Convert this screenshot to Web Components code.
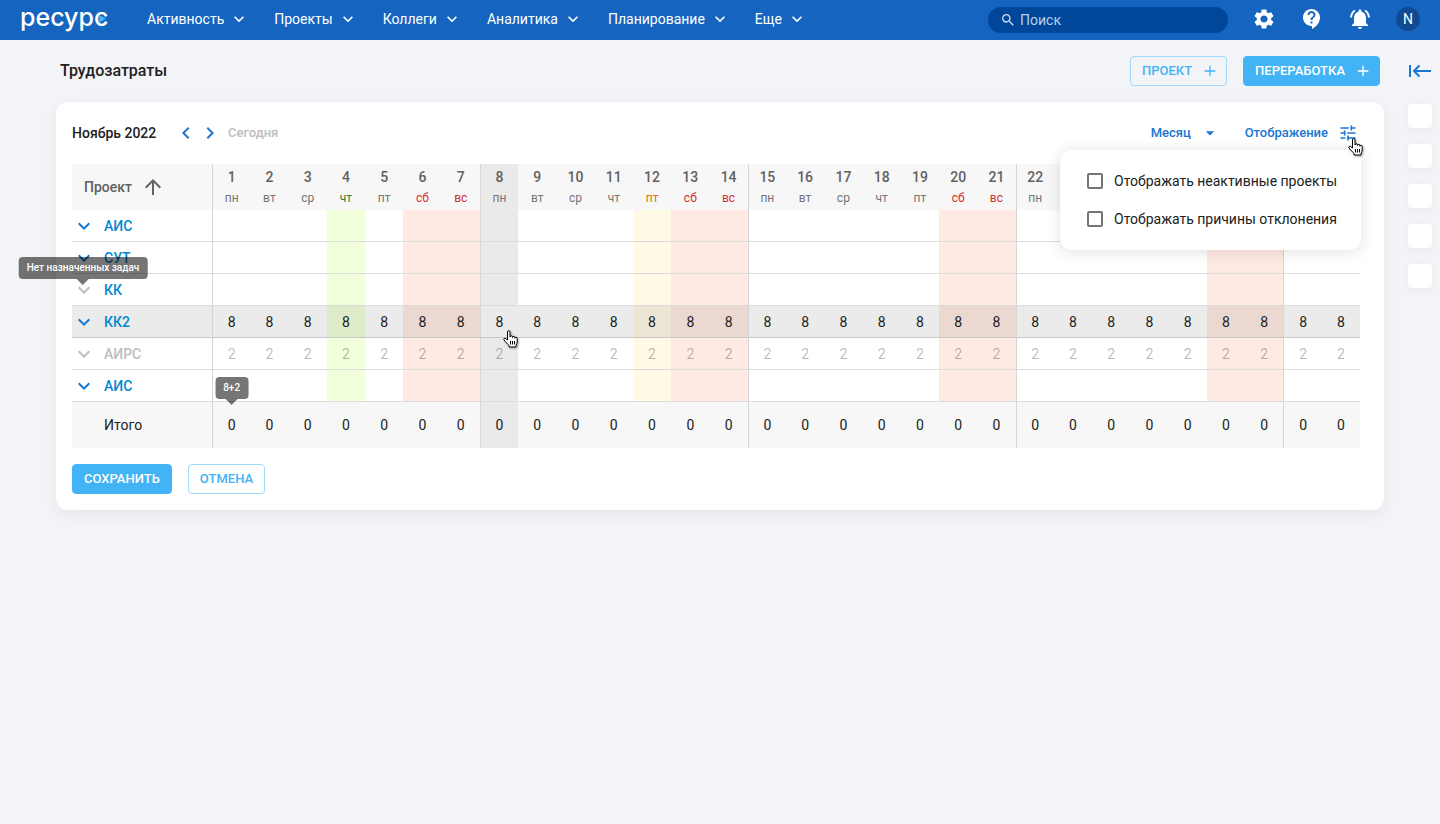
<!DOCTYPE html>
<html lang="ru">
<head>
<meta charset="utf-8">
<meta name="viewport" content="width=device-width, initial-scale=1">
<title>Трудозатраты</title>
<style>
  :root {
    --bar: #1565c0;
    --link: #1976d2;
    --name: #0288d1;
    --accent: #42b3f5;
    --accent-line: #a1d9fa;
    --text: #212121;
    --muted: #616161;
    --off: #bdbdbd;
  }
  html, body { margin: 0; min-height: 100vh; }
  body {
    background: #f3f4f7;
    color: var(--text);
    font-family: Roboto, "Liberation Sans", sans-serif;
    font-size: 14px;
    line-height: 20px;
  }
</style>
</head>
<body>
<app-shell>
  <app-header slot="header"></app-header>
  <page-heading slot="main">
    Трудозатраты
    <ui-button slot="actions" icon="plus" variant="outline">ПРОЕКТ</ui-button>
    <ui-button slot="actions" icon="plus">ПЕРЕРАБОТКА</ui-button>
  </page-heading>
  <ui-card slot="main">
    <month-toolbar slot="top"></month-toolbar>
    <time-table></time-table>
    <ui-button slot="footer">СОХРАНИТЬ</ui-button>
    <ui-button slot="footer" variant="outline">ОТМЕНА</ui-button>
  </ui-card>
  <side-rail slot="rail"></side-rail>
</app-shell>

<script>
const ICONS = {
  down: '<path d="M16.59 8.59L12 13.17 7.41 8.59 6 10l6 6 6-6z"/>',
  left: '<path d="M15.41 7.41L14 6l-6 6 6 6 1.41-1.41L10.83 12z"/>',
  right: '<path d="M10 6L8.59 7.41 13.17 12l-4.58 4.59L10 18l6-6z"/>',
  drop: '<path d="M7 10l5 5 5-5z"/>',
  plus: '<path d="M20 13h-7v7h-2v-7H4v-2h7V4h2v7h7z"/>',
  up: '<path d="M4 12l1.41 1.41L11 7.83V20h2V7.83l5.58 5.59L20 12l-8-8z"/>',
  tune: '<path d="M3 17v2h6v-2H3zM3 5v2h10V5H3zm10 16v-2h8v-2h-8v-2h-2v6h2zM7 9v2H3v2h4v2h2V9H7zm14 4v-2H11v2h10zm-6-4h2V7h4V5h-4V3h-2v6z"/>',
  search: '<path d="M15.5 14h-.79l-.28-.27A6.471 6.471 0 0 0 16 9.5 6.5 6.5 0 1 0 9.5 16c1.61 0 3.09-.59 4.23-1.57l.27.28v.79l5 4.99L20.49 19l-4.99-5zm-6 0C7.01 14 5 11.99 5 9.5S7.01 5 9.5 5 14 7.01 14 9.5 11.99 14 9.5 14z"/>',
  settings: '<path d="M19.14 12.94c.04-.3.06-.61.06-.94 0-.32-.02-.64-.07-.94l2.03-1.58a.49.49 0 0 0 .12-.61l-1.92-3.32a.488.488 0 0 0-.59-.22l-2.39.96c-.5-.38-1.03-.7-1.62-.94l-.36-2.54a.484.484 0 0 0-.48-.41h-3.84c-.24 0-.43.17-.47.41l-.36 2.54c-.59.24-1.13.57-1.62.94l-2.39-.96c-.22-.08-.47 0-.59.22L2.74 8.87c-.12.21-.08.47.12.61l2.03 1.58c-.05.3-.09.63-.09.94s.02.64.07.94l-2.03 1.58a.49.49 0 0 0-.12.61l1.92 3.32c.12.22.37.29.59.22l2.39-.96c.5.38 1.03.7 1.62.94l.36 2.54c.05.24.24.41.48.41h3.84c.24 0 .44-.17.47-.41l.36-2.54c.59-.24 1.13-.56 1.62-.94l2.39.96c.22.08.47 0 .59-.22l1.92-3.32c.12-.22.07-.47-.12-.61l-2.01-1.58zM12 15.6c-1.98 0-3.6-1.62-3.6-3.6s1.62-3.6 3.6-3.6 3.6 1.62 3.6 3.6-1.62 3.6-3.6 3.6z"/>',
  help: '<path d="M11.5 2C6.81 2 3 5.81 3 10.5S6.81 19 11.5 19h.5v3c4.86-2.34 8-7 8-11.5C20 5.81 16.19 2 11.5 2zm1 14.5h-2v-2h2v2zm0-3.5h-2c0-3.25 3-3 3-5 0-1.1-.9-2-2-2s-2 .9-2 2h-2c0-2.21 1.79-4 4-4s4 1.79 4 4c0 2.5-3 2.75-3 5z"/>',
  bell: '<path d="M7.58 4.08L6.15 2.65C3.75 4.48 2.17 7.3 2.03 10.5h2c.15-2.65 1.51-4.97 3.55-6.42zm12.39 6.42h2c-.15-3.2-1.73-6.02-4.12-7.85l-1.42 1.43c2.02 1.45 3.39 3.77 3.54 6.42zM18 11c0-3.07-1.64-5.64-4.5-6.32V4c0-.83-.67-1.5-1.5-1.5s-1.5.67-1.5 1.5v.68C7.63 5.36 6 7.92 6 11v5l-2 2v1h16v-1l-2-2v-5zm-6 11c.14 0 .27-.01.4-.04.65-.14 1.18-.58 1.44-1.18.1-.24.15-.5.15-.78h-4c.01 1.1.9 2 2.01 2z"/>',
  collapse: '<path d="M2 6v12M23 12H6M11.500 6.500L6 12l5.500 5.500" fill="none" stroke="currentColor" stroke-width="2"/>',
};

const RESET = `
  :host, *, *::before, *::after { box-sizing: border-box; }
  button, select, input { font: inherit; color: inherit; margin: 0; }
  button { border: 0; padding: 0; background: none; cursor: pointer; }
`;

class Base extends HTMLElement {
  connectedCallback() {
    if (this.shadowRoot) return;
    this.attachShadow({ mode: 'open' }).innerHTML = `<style>${RESET}</style>` + this.view();
  }
}

customElements.define('ui-icon', class extends Base {
  view() {
    const size = this.getAttribute('size') || 24;
    return `<style>:host { display: block; flex: none; } svg { display: block; }</style>
      <svg width="${size}" height="${size}" viewBox="0 0 24 24" fill="currentColor" aria-hidden="true">${ICONS[this.getAttribute('name')]}</svg>`;
  }
});

customElements.define('hand-cursor', class extends Base {
  view() {
    return `<style>:host { display: block; pointer-events: none; } svg { display: block; overflow: visible; filter: drop-shadow(1px 1px 1px rgba(0,0,0,.35)); }</style>
      <svg width="16" height="18" viewBox="0 0 16 18" aria-hidden="true">
        <path d="M4.500 10V1.900a1.200 1.200 0 0 1 2.500 0V7a1.200 1.200 0 0 1 2.500 0v.5a1.200 1.200 0 0 1 2.400.2v.6a1.150 1.150 0 0 1 2.300.3V12c0 1.600-.9 2.300-1.200 3.500V17H6v-1.400C5 14 2.800 12.400 1 9.900.3 8.600 1.600 7.600 2.700 8.500z" fill="#fff" stroke="#000" stroke-linejoin="round"/>
        <path d="M7.500 11v3.500M9.500 11v3.500M11.500 11v3.500" stroke="#000" fill="none"/>
      </svg>`;
  }
});

customElements.define('ui-tooltip', class extends Base {
  view() {
    return `<style>
      :host {
        display: block; width: max-content; padding: 4px 8px; border-radius: 4px;
        background: rgba(0,0,0,.54); color: #fff;
        font-size: 10px; line-height: 14px; font-weight: 500; pointer-events: none;
      }
      :host::after {
        content: ""; position: absolute; top: 100%; left: 50%; margin-left: -6px;
        border: 6px solid transparent; border-bottom-width: 0; border-top-color: rgba(0,0,0,.54);
      }
    </style><slot></slot>`;
  }
});

customElements.define('ui-button', class extends Base {
  view() {
    const icon = this.getAttribute('icon');
    return `<style>
      :host { display: block; }
      button {
        display: flex; align-items: center; gap: 10px; height: 30px; padding: 0 11px;
        border: 1px solid var(--accent); border-radius: 4px; background: var(--accent);
        color: #fff; font-size: 13px; font-weight: 500; white-space: nowrap;
      }
      button.icon { padding-right: 8px; }
      :host([variant="outline"]) button { background: transparent; border-color: var(--accent-line); color: var(--accent); }
    </style>
    <button type="button" class="${icon ? 'icon' : ''}"><slot></slot>${icon ? `<ui-icon name="${icon}" size="16"></ui-icon>` : ''}</button>`;
  }
});

customElements.define('app-shell', class extends Base {
  view() {
    return `<style>
      :host { display: block; }
      .body { display: flex; padding-left: 56px; }
      main { flex: 1; min-width: 0; }
    </style>
    <slot name="header"></slot>
    <div class="body"><main><slot name="main"></slot></main><slot name="rail"></slot></div>`;
  }
});

customElements.define('nav-item', class extends Base {
  view() {
    return `<style>
      :host { display: block; }
      button { display: flex; align-items: center; gap: 5px; white-space: nowrap; }
    </style>
    <button type="button"><slot></slot><ui-icon name="down" size="20"></ui-icon></button>`;
  }
});

customElements.define('app-header', class extends Base {
  view() {
    const items = ['Активность', 'Проекты', 'Коллеги', 'Аналитика', 'Планирование', 'Еще'];
    return `<style>
      :host { display: flex; align-items: center; height: 40px; padding: 0 20px; background: var(--bar); color: #fff; }
      .logo {
        flex: none; width: 127px; padding-bottom: 6px; color: #fff; text-decoration: none;
        font-family: Inter, Roboto, sans-serif; font-size: 25px; line-height: 32px; font-weight: 500;
      }
      .logo span { position: relative; }
      .logo svg { position: absolute; right: 1px; top: 13px; }
      nav { display: flex; gap: 25px; }
      .right { display: flex; align-items: center; gap: 24px; margin-left: auto; }
      nav, .right > button { margin-bottom: 2px; }
      .search { display: flex; align-items: center; gap: 4px; width: 240px; height: 26px; padding: 0 12px; border-radius: 13px; background: #004799; color: #c9dcf2; }
      input { flex: 1; min-width: 0; border: 0; padding: 0; background: none; outline: 0; }
      input::placeholder { color: #b8d1ee; opacity: 1; }
      .avatar { width: 24px; height: 24px; border-radius: 50%; background: #124a91; }
    </style>
    <a class="logo" href="#"><span>ресурс<svg width="9" height="9" viewBox="0 0 8 8" aria-hidden="true"><path d="M1 0v7l6-4z" fill="#42b3f5"/></svg></span></a>
    <nav>${items.map(t => `<nav-item>${t}</nav-item>`).join('')}</nav>
    <div class="right">
      <label class="search"><ui-icon name="search" size="16"></ui-icon><input type="search" placeholder="Поиск" aria-label="Поиск"></label>
      <button type="button" aria-label="Настройки"><ui-icon name="settings"></ui-icon></button>
      <button type="button" aria-label="Помощь"><ui-icon name="help"></ui-icon></button>
      <button type="button" aria-label="Уведомления"><ui-icon name="bell"></ui-icon></button>
      <button type="button" class="avatar">N</button>
    </div>`;
  }
});

customElements.define('page-heading', class extends Base {
  view() {
    return `<style>
      :host { display: flex; align-items: center; justify-content: space-between; padding: 16px 4px; }
      h1 { margin: 0; font-size: 16px; line-height: 24px; font-weight: 500; }
      div { display: flex; gap: 16px; }
    </style>
    <h1><slot></slot></h1><div><slot name="actions"></slot></div>`;
  }
});

customElements.define('ui-card', class extends Base {
  view() {
    return `<style>
      :host { display: flex; flex-direction: column; gap: 16px; padding: 16px 24px 16px 16px; border-radius: 12px; background: #fff; box-shadow: 0 4px 16px rgba(0,0,0,.06); }
      footer { display: flex; gap: 16px; }
    </style>
    <slot name="top"></slot><slot></slot><footer><slot name="footer"></slot></footer>`;
  }
});

customElements.define('display-menu', class extends Base {
  view() {
    return `<style>
      :host { display: flex; flex-direction: column; gap: 18px; width: 301px; padding: 21px 20px 21px 27px; border-radius: 12px; background: #fff; box-shadow: 0 2px 16px rgba(0,0,0,.12); color: var(--text); font-size: 14px; font-weight: 400; }
      label { display: flex; align-items: center; gap: 11px; white-space: nowrap; }
      input { appearance: none; flex: none; width: 16px; height: 16px; border: 2px solid #757575; border-radius: 2px; background: #fff; }
    </style>
    <label><input type="checkbox">Отображать неактивные проекты</label>
    <label><input type="checkbox">Отображать причины отклонения</label>`;
  }
});

customElements.define('month-toolbar', class extends Base {
  view() {
    return `<style>
      :host { display: flex; align-items: center; height: 30px; font-size: 13px; font-weight: 500; color: var(--link); }
      h2 { margin: 0; min-width: 102px; color: var(--text); font-size: 14px; line-height: 20px; font-weight: 500; }
      .today { margin-left: 6px; color: var(--off); }
      .right { display: flex; align-items: center; gap: 25px; margin-left: auto; }
      .range { display: flex; align-items: center; }
      select { appearance: none; border: 0; padding: 0 28px 0 0; margin-right: -20px; background: none; font-weight: 500; cursor: pointer; }
      ui-icon { pointer-events: none; }
      .display { position: relative; }
      .display button { display: flex; align-items: center; gap: 10px; padding-right: 2px; }
      display-menu { position: absolute; z-index: 2; top: 27px; right: -1px; }
      hand-cursor { position: absolute; z-index: 3; left: calc(100% - 12px); top: 15px; }
    </style>
    <h2>Ноябрь 2022</h2>
    <button type="button" aria-label="Предыдущий месяц"><ui-icon name="left"></ui-icon></button>
    <button type="button" aria-label="Следующий месяц"><ui-icon name="right"></ui-icon></button>
    <button type="button" class="today">Сегодня</button>
    <div class="right">
      <div class="range"><select aria-label="Период"><option>Месяц</option></select><ui-icon name="drop" size="20"></ui-icon></div>
      <div class="display">
        <button type="button">Отображение<ui-icon name="tune" size="20"></ui-icon></button>
        <display-menu></display-menu>
        <hand-cursor></hand-cursor>
      </div>
    </div>`;
  }
});

const WEEK = ['пн', 'вт', 'ср', 'чт', 'пт', 'сб', 'вс'];
const DAYS = Array.from({ length: 30 }, (_, i) => {
  const n = i + 1, w = i % 7, cls = [];
  if (w > 4) cls.push('weekend');
  if (w === 0) cls.push('week');
  if (n === 4) cls.push('green');
  if (n === 8) cls.push('today');
  if (n === 12) cls.push('yellow');
  return { n, w: WEEK[w], cls: cls.join(' ') };
});
const ROWS = [
  { name: 'АИС' },
  { name: 'СУТ' },
  { name: 'КК', empty: true, tip: 'Нет назначенных задач' },
  { name: 'КК2', value: 8, cls: 'hover', cursor: 8 },
  { name: 'АИРС', value: 2, cls: 'inactive', empty: true },
  { name: 'АИС' },
];

customElements.define('time-table', class extends Base {
  view() {
    const row = r => `<tr class="${r.cls || ''}">
      <th scope="row"><div class="name">
        <button type="button" class="${r.empty ? 'off' : ''}" aria-label="Развернуть"><ui-icon name="down"></ui-icon></button>
        <a href="#">${r.name}</a>${r.tip ? `<ui-tooltip>${r.tip}</ui-tooltip>` : ''}
      </div></th>
      ${DAYS.map(d => `<td class="${d.cls}">${r.value || ''}${r.cursor === d.n ? '<hand-cursor></hand-cursor>' : ''}</td>`).join('')}
    </tr>`;
    return `<style>
      :host { display: block; }
      table { width: 100%; table-layout: fixed; border-collapse: separate; border-spacing: 0; }
      .first { width: 140px; }
      th, td { position: relative; padding: 0; height: 32px; text-align: center; font-weight: 400; }
      tbody th, tbody td { border-bottom: 1px solid #dcdcdc; }
      .week { border-left: 1px solid #d6d6d6; }
      thead th, tfoot th, tfoot td { height: 46px; background-color: #f7f7f7; }
      thead th { color: var(--muted); font-weight: 500; }
      thead b { display: block; font-weight: 500; line-height: 22px; }
      thead small { display: block; font-size: 12px; line-height: 20px; font-weight: 400; color: #757575; }
      tbody .weekend { background-color: #ffeae3; }
      tbody .green { background-color: #f1ffda; }
      tbody .yellow { background-color: #fffae6; }
      th.today, td.today { background-color: #eaeaea; }
      thead .weekend small { color: #d32f2f; }
      thead .green small { color: #2e7d32; }
      thead .yellow small { color: #ef6c00; }
      .hover th, .hover td { background-image: linear-gradient(rgba(0,0,0,.08), rgba(0,0,0,.08)); border-bottom-color: #c8c8c8; }
      .hover .today { background-color: #fff; }
      .inactive td { color: rgba(0,0,0,.28); }
      .sort { display: flex; align-items: center; gap: 9px; padding-left: 12px; font-weight: 500; }
      .name { position: relative; display: flex; align-items: center; gap: 8px; }
      .name button { color: var(--link); }
      .name .off { color: var(--off); }
      a { color: var(--name); text-decoration: none; font-weight: 500; }
      .inactive a { color: var(--off); }
      tfoot th { text-align: left; padding-left: 32px; }
      ui-tooltip { position: absolute; z-index: 1; }
      .name ui-tooltip { bottom: 23px; left: 11px; transform: translateX(-50%); }
      td ui-tooltip { bottom: calc(100% + 3px); left: 50%; transform: translateX(-50%); }
      hand-cursor { position: absolute; z-index: 1; left: 60%; top: 24px; }
    </style>
    <table>
      <colgroup><col class="first"><col span="30"></colgroup>
      <thead><tr>
        <th scope="col"><button type="button" class="sort">Проект<ui-icon name="up"></ui-icon></button></th>
        ${DAYS.map(d => `<th scope="col" class="${d.cls}"><b>${d.n}</b><small>${d.w}</small></th>`).join('')}
      </tr></thead>
      <tbody>${ROWS.map(row).join('')}</tbody>
      <tfoot><tr><th scope="row">Итого</th>
        ${DAYS.map(d => `<td class="${d.cls}">0${d.n === 1 ? '<ui-tooltip>8+2</ui-tooltip>' : ''}</td>`).join('')}
      </tr></tfoot>
    </table>`;
  }
});

customElements.define('side-rail', class extends Base {
  view() {
    return `<style>
      :host { display: flex; flex-direction: column; align-items: center; gap: 16px; flex: none; width: 56px; padding: 19px 0 0 16px; }
      .toggle { color: var(--link); margin-bottom: 5px; }
      .tile { width: 24px; height: 24px; border-radius: 4px; background: #fff; box-shadow: 0 2px 8px rgba(0,0,0,.05); }
    </style>
    <button type="button" class="toggle" aria-label="Свернуть"><ui-icon name="collapse"></ui-icon></button>
    ${[1, 2, 3, 4, 5].map(n => `<button type="button" class="tile" aria-label="Панель ${n}"></button>`).join('')}`;
  }
});
</script>
</body>
</html>
